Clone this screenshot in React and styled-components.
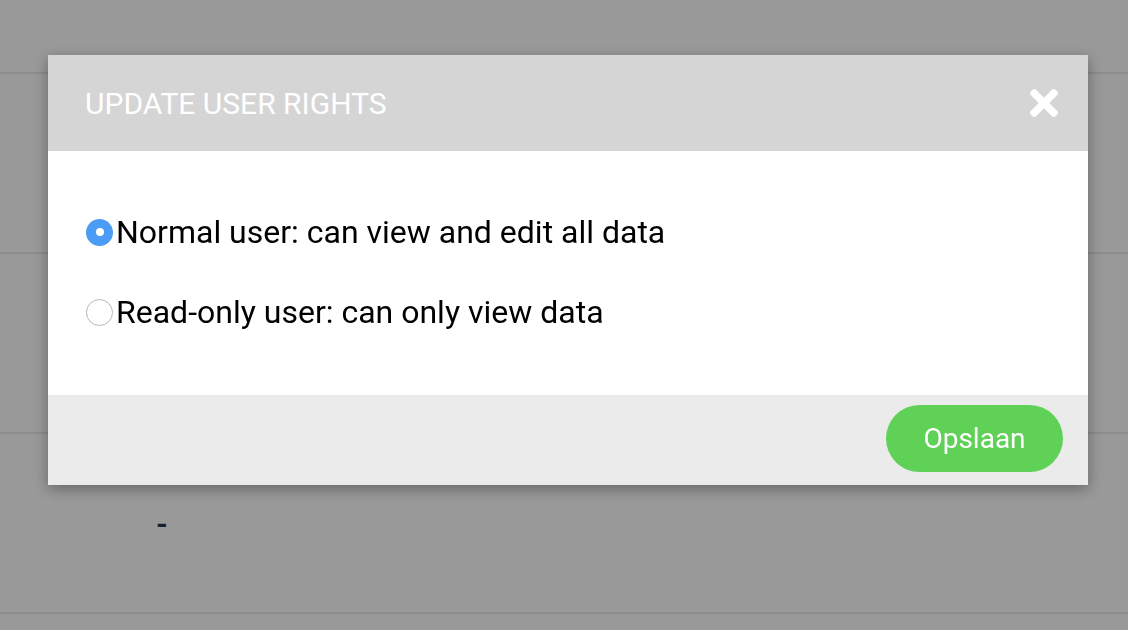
import React, { useState } from "react";
import styled, { createGlobalStyle } from "styled-components";

const GlobalStyle = createGlobalStyle`
  html, body {
    margin: 0;
    padding: 0;
    background: #ffffff;
    font-family: Roboto, "Liberation Sans", Arial, sans-serif;
  }
  * {
    box-sizing: border-box;
  }
`;

const Page = styled.div`
  width: 100%;
  height: 630px;
  overflow: hidden;
  background: #ffffff;
`;

const TopBar = styled.div`
  height: 74px;
  border-bottom: 2px solid #e9e9e9;
`;

const Row = styled.div`
  height: 180px;
  display: flex;
  align-items: center;
  border-bottom: 2px solid #e9e9e9;
  padding-left: 156px;
  color: #2a3a55;
  font-size: 30px;
  font-weight: 700;
`;

const Overlay = styled.div`
  position: fixed;
  inset: 0;
  background: rgba(0, 0, 0, 0.4);
  padding: 55px 40px 0 48px;
`;

const Modal = styled.div`
  width: 1040px;
  background: #ffffff;
  box-shadow: 0 4px 14px rgba(0, 0, 0, 0.35);
`;

const Header = styled.div`
  height: 96px;
  background: #d5d5d5;
  display: flex;
  align-items: center;
  justify-content: space-between;
  padding: 0 30px 0 37px;
`;

const Title = styled.h2`
  margin: 0;
  color: #ffffff;
  font-size: 30px;
  font-weight: 400;
  letter-spacing: 0;
`;

const CloseButton = styled.button`
  border: none;
  background: none;
  padding: 0;
  cursor: pointer;
  display: flex;
  width: 28px;
  height: 28px;
`;

const Body = styled.div`
  padding: 61px 37px 63px 38px;
  display: flex;
  flex-direction: column;
  gap: 40px;
`;

const Option = styled.label`
  height: 40px;
  display: flex;
  align-items: center;
  font-size: 32px;
  color: #000000;
  cursor: pointer;
`;

const Radio = styled.span`
  width: 27px;
  height: 27px;
  border-radius: 50%;
  flex-shrink: 0;
  display: flex;
  align-items: center;
  justify-content: center;
  margin-right: 3px;
  background: ${(props) => (props.checked ? "#4a9cf4" : "#ffffff")};
  border: ${(props) => (props.checked ? "none" : "1.5px solid #b5b5b5")};

  &::after {
    content: "";
    display: ${(props) => (props.checked ? "block" : "none")};
    width: 8px;
    height: 8px;
    border-radius: 50%;
    background: #ffffff;
  }
`;

const Footer = styled.div`
  height: 90px;
  background: #ebebeb;
  display: flex;
  align-items: flex-start;
  justify-content: flex-end;
  padding: 10px 25px 0;
`;

const SaveButton = styled.button`
  width: 177px;
  height: 67px;
  border: none;
  border-radius: 34px;
  background: #5fd157;
  color: #ffffff;
  font-family: inherit;
  font-size: 28px;
  cursor: pointer;
`;

const options = [
  { id: "normal", label: "Normal user: can view and edit all data" },
  { id: "readonly", label: "Read-only user: can only view data" },
];

const CloseIcon = () => (
  <svg width="28" height="28" viewBox="0 80 352 352" fill="#ffffff">
    <path d="M242.72 256l100.07-100.07c12.28-12.28 12.28-32.19 0-44.48l-22.24-22.240c-12.28-12.28-32.19-12.28-44.48 0L176 189.28 75.93 89.21c-12.28-12.28-32.19-12.28-44.48 0L9.21 111.45c-12.28 12.28-12.28 32.19 0 44.48L109.28 256 9.21 356.07c-12.28 12.28-12.28 32.19 0 44.48l22.24 22.24c12.28 12.28 32.2 12.28 44.48 0L176 322.72l100.07 100.07c12.28 12.28 32.2 12.28 44.48 0l22.24-22.24c12.28-12.28 12.28-32.19 0-44.48L242.72 256z" />
  </svg>
);

const App = () => {
  const [role, setRole] = useState("normal");

  return (
    <>
      <GlobalStyle />
      <Page>
        <TopBar />
        <Row />
        <Row />
        <Row>-</Row>
      </Page>
      <Overlay>
        <Modal>
          <Header>
            <Title>UPDATE USER RIGHTS</Title>
            <CloseButton>
              <CloseIcon />
            </CloseButton>
          </Header>
          <Body>
            {options.map((opt) => (
              <Option key={opt.id} onClick={() => setRole(opt.id)}>
                <Radio checked={role === opt.id} />
                {opt.label}
              </Option>
            ))}
          </Body>
          <Footer>
            <SaveButton>Opslaan</SaveButton>
          </Footer>
        </Modal>
      </Overlay>
    </>
  );
};

export default App;
